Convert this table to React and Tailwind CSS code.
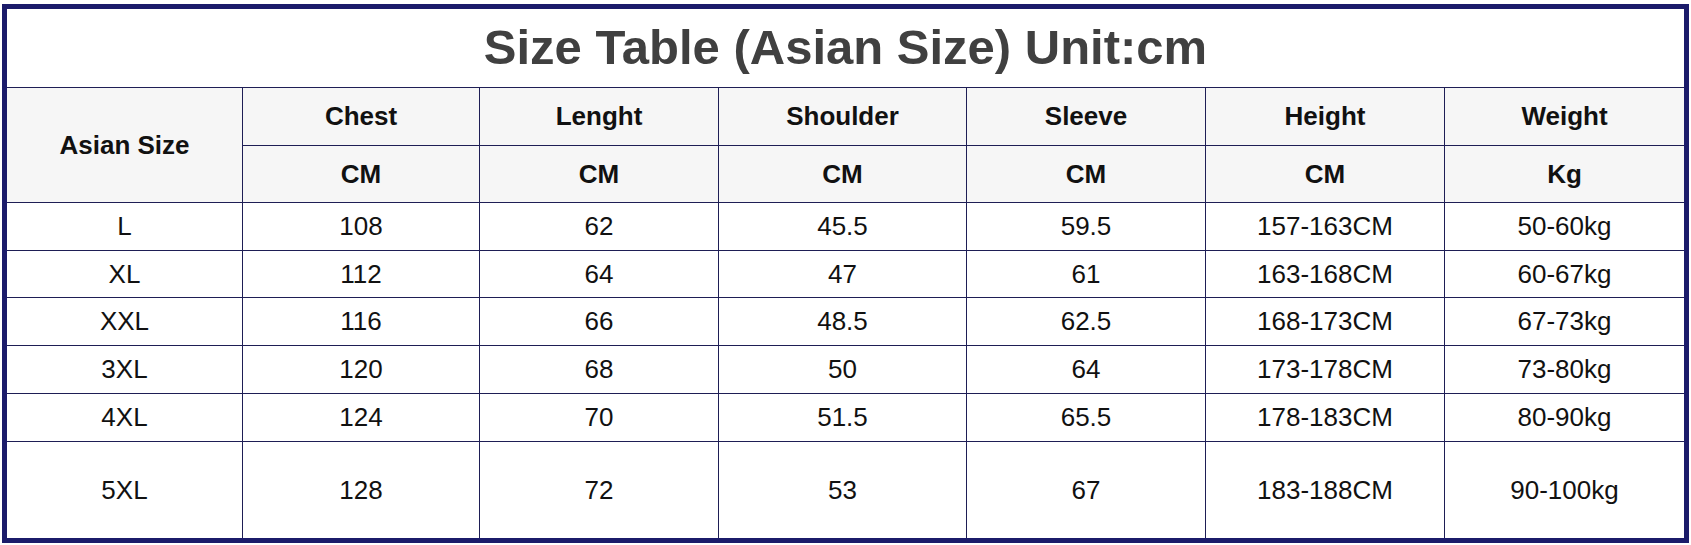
const columns = [
  { name: 'Chest', unit: 'CM' },
  { name: 'Lenght', unit: 'CM' },
  { name: 'Shoulder', unit: 'CM' },
  { name: 'Sleeve', unit: 'CM' },
  { name: 'Height', unit: 'CM' },
  { name: 'Weight', unit: 'Kg' },
];

const rows = [
  ['L', '108', '62', '45.5', '59.5', '157-163CM', '50-60kg'],
  ['XL', '112', '64', '47', '61', '163-168CM', '60-67kg'],
  ['XXL', '116', '66', '48.5', '62.5', '168-173CM', '67-73kg'],
  ['3XL', '120', '68', '50', '64', '173-178CM', '73-80kg'],
  ['4XL', '124', '70', '51.5', '65.5', '178-183CM', '80-90kg'],
  ['5XL', '128', '72', '53', '67', '183-188CM', '90-100kg'],
];

export default function App() {
  return (
    <div className="h-[545px] w-[1691px] bg-white pt-[4px] pl-[2px]" style={{ fontFamily: '"Liberation Sans", Arial, sans-serif' }}>
      <div className="h-[539px] w-[1687px] border-[5px] border-[#1b1b6a] bg-white">
        <div className="grid h-full grid-cols-[235px_237px_239px_248px_239px_239px_1fr] grid-rows-[78px_58px_57px_48px_47px_48px_48px_48px_1fr]">
          {/* Title */}
          <div className="col-span-7 flex items-center justify-center text-[49px] font-bold text-[#404040]">
            Size Table (Asian Size) Unit:cm
          </div>

          {/* Header */}
          <div className="row-span-2 flex items-center justify-center border-t border-[#1e1e55] bg-[#f6f6f6] text-[26px] font-bold text-[#111]">
            Asian Size
          </div>
          {columns.map((c) => (
            <div key={c.name} className="flex items-center justify-center border-t border-l border-[#1e1e55] bg-[#f6f6f6] text-[26px] font-bold text-[#111]">
              {c.name}
            </div>
          ))}
          {columns.map((c) => (
            <div key={c.name + '-unit'} className="flex items-center justify-center border-t border-l border-[#1e1e55] bg-[#f6f6f6] text-[26px] font-bold text-[#111]">
              {c.unit}
            </div>
          ))}

          {/* Body */}
          {rows.map((r) =>
            r.map((v, i) => (
              <div
                key={r[0] + i}
                className={
                  i === 0
                    ? 'flex items-center justify-center border-t border-[#1e1e55] text-[26px] text-[#111]'
                    : 'flex items-center justify-center border-t border-l border-[#1e1e55] text-[26px] text-[#111]'
                }
              >
                {v}
              </div>
            ))
          )}
        </div>
      </div>
    </div>
  );
}
